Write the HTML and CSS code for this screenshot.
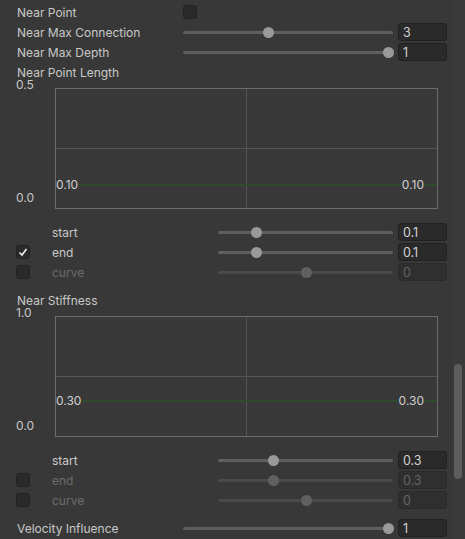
FILE: index.html
```html
<!DOCTYPE html>
<html lang="en">
<head>
    <meta charset="UTF-8">
    <title>Inspector</title>
    <link rel="stylesheet" href="styles.css">
</head>
<body>
    <div class="inspector">
        <div class="panel">
            <div class="field">
                <span class="label">Near Point</span>
                <span class="toggle"></span>
            </div>
            <div class="field">
                <span class="label">Near Max Connection</span>
                <div class="slider"><div class="thumb" style="--v:0.4"></div></div>
                <span class="num">3</span>
            </div>
            <div class="field">
                <span class="label">Near Max Depth</span>
                <div class="slider"><div class="thumb" style="--v:1"></div></div>
                <span class="num">1</span>
            </div>

            <div class="field"><span class="label">Near Point Length</span></div>
            <div class="curve">
                <div class="axis"><span>0.5</span><span>0.0</span></div>
                <div class="graph">
                    <div class="line" style="--v:0.2"></div>
                    <span class="val left" style="--v:0.2">0.10</span>
                    <span class="val right" style="--v:0.2">0.10</span>
                </div>
            </div>
            <div class="subs">
                <div class="field sub">
                    <span class="slot"></span>
                    <span class="label">start</span>
                    <div class="slider"><div class="thumb" style="--v:0.2"></div></div>
                    <span class="num">0.1</span>
                </div>
                <div class="field sub">
                    <span class="slot"><span class="toggle on">
                        <svg viewBox="0 0 14 14" width="14" height="14"><polyline points="3.5,7.5 6,10 10.5,4" fill="none" stroke="#eee" stroke-width="1.6"/></svg>
                    </span></span>
                    <span class="label">end</span>
                    <div class="slider"><div class="thumb" style="--v:0.2"></div></div>
                    <span class="num">0.1</span>
                </div>
                <div class="field sub off">
                    <span class="slot"><span class="toggle"></span></span>
                    <span class="label">curve</span>
                    <div class="slider"><div class="thumb" style="--v:0.5"></div></div>
                    <span class="num">0</span>
                </div>
            </div>

            <div class="field gap"><span class="label">Near Stiffness</span></div>
            <div class="curve">
                <div class="axis"><span>1.0</span><span>0.0</span></div>
                <div class="graph">
                    <div class="line" style="--v:0.3"></div>
                    <span class="val left" style="--v:0.3">0.30</span>
                    <span class="val right" style="--v:0.3">0.30</span>
                </div>
            </div>
            <div class="subs">
                <div class="field sub">
                    <span class="slot"></span>
                    <span class="label">start</span>
                    <div class="slider"><div class="thumb" style="--v:0.3"></div></div>
                    <span class="num">0.3</span>
                </div>
                <div class="field sub off">
                    <span class="slot"><span class="toggle"></span></span>
                    <span class="label">end</span>
                    <div class="slider"><div class="thumb" style="--v:0.3"></div></div>
                    <span class="num">0.3</span>
                </div>
                <div class="field sub off">
                    <span class="slot"><span class="toggle"></span></span>
                    <span class="label">curve</span>
                    <div class="slider"><div class="thumb" style="--v:0.5"></div></div>
                    <span class="num">0</span>
                </div>
            </div>

            <div class="field gap">
                <span class="label">Velocity Influence</span>
                <div class="slider"><div class="thumb" style="--v:1"></div></div>
                <span class="num">1</span>
            </div>
        </div>
        <div class="scrollbar"><div class="grip"></div></div>
    </div>
</body>
</html>
```

FILE: styles.css
```css
html, body {
    margin: 0;
    background: #383838;
    height: 100%;
    overflow: hidden;
}
body {
    font-family: Inter, "Noto Sans", sans-serif;
    font-size: 12px;
    color: #c8c8c8;
}
.inspector {
    display: flex;
    height: 539px;
}
.panel {
    width: 452px;
    box-sizing: border-box;
    padding: 2px 4px 0 17px;
}
.field {
    display: flex;
    align-items: center;
    height: 20px;
}
.label {
    width: 166px;
    flex-shrink: 0;
    white-space: nowrap;
    line-height: 13px;
}
.toggle {
    display: block;
    width: 14px;
    height: 14px;
    box-sizing: border-box;
    background: #2a2a2a;
    border: 1px solid #232323;
    border-radius: 3px;
}
.toggle svg {
    display: block;
    margin: -1px;
}
.slider {
    flex: 1;
    position: relative;
    height: 11px;
    margin-right: 5px;
}
.slider::before {
    content: "";
    position: absolute;
    left: 0;
    right: 0;
    top: 4px;
    height: 3px;
    border-radius: 2px;
    background: #5e5e5e;
}
.thumb {
    position: absolute;
    top: 0;
    left: calc(var(--v) * (100% - 10px));
    width: 11px;
    height: 11px;
    border-radius: 50%;
    background: #999999;
}
.num {
    width: 49px;
    height: 18px;
    box-sizing: border-box;
    padding: 1px 0 0 4px;
    line-height: 15px;
    background: #2a2a2a;
    border: 1px solid #212121;
    border-radius: 3px;
    color: #d2d2d2;
    font-size: 12.5px;
}

/* curve preview */
.curve {
    display: flex;
    margin-top: 6px;
}
.axis {
    width: 39px;
    display: flex;
    flex-direction: column;
    justify-content: space-between;
    margin: -8px 0 6px -1px;
    line-height: 10px;
}
.graph {
    position: relative;
    width: 383px;
    height: 121px;
    box-sizing: border-box;
    border: 1px solid #6c6c6c;
    background: linear-gradient(#555555, #555555) center / 1px 100% no-repeat,
                linear-gradient(#555555, #555555) center / 100% 1px no-repeat,
                #393939;
}
.line {
    position: absolute;
    left: 0;
    right: 0;
    bottom: calc(var(--v) * 100% - 2px);
    height: 2px;
    background: #2f4a2c;
}
.val {
    position: absolute;
    bottom: calc(var(--v) * 100% - 9px);
    line-height: 16px;
    padding-right: 1px;
    background: #393939;
    color: #d0d0d0;
}
.val.left { left: 0; }
.val.right { right: 12px; padding-left: 1px; }

.subs {
    margin-top: 13px;
}
.slot {
    width: 35px;
    flex-shrink: 0;
    margin-left: -1px;
    padding-right: 1px;
}
.sub.off .label {
    color: #6c6c6c;
}
.sub.off .slider::before {
    background: #4a4a4a;
}
.sub.off .thumb {
    background: #606060;
}
.sub.off .num {
    background: #2f2f2f;
    border-color: #2a2a2a;
    color: #646464;
}
.gap {
    margin-top: 8px;
}

.scrollbar {
    width: 13px;
    background: #3a3a3a;
    border-left: 1px solid #353535;
}
.grip {
    width: 8px;
    height: 115px;
    margin: 364px 0 0 2px;
    border-radius: 4px;
    background: #5d5d5d;
}
```
